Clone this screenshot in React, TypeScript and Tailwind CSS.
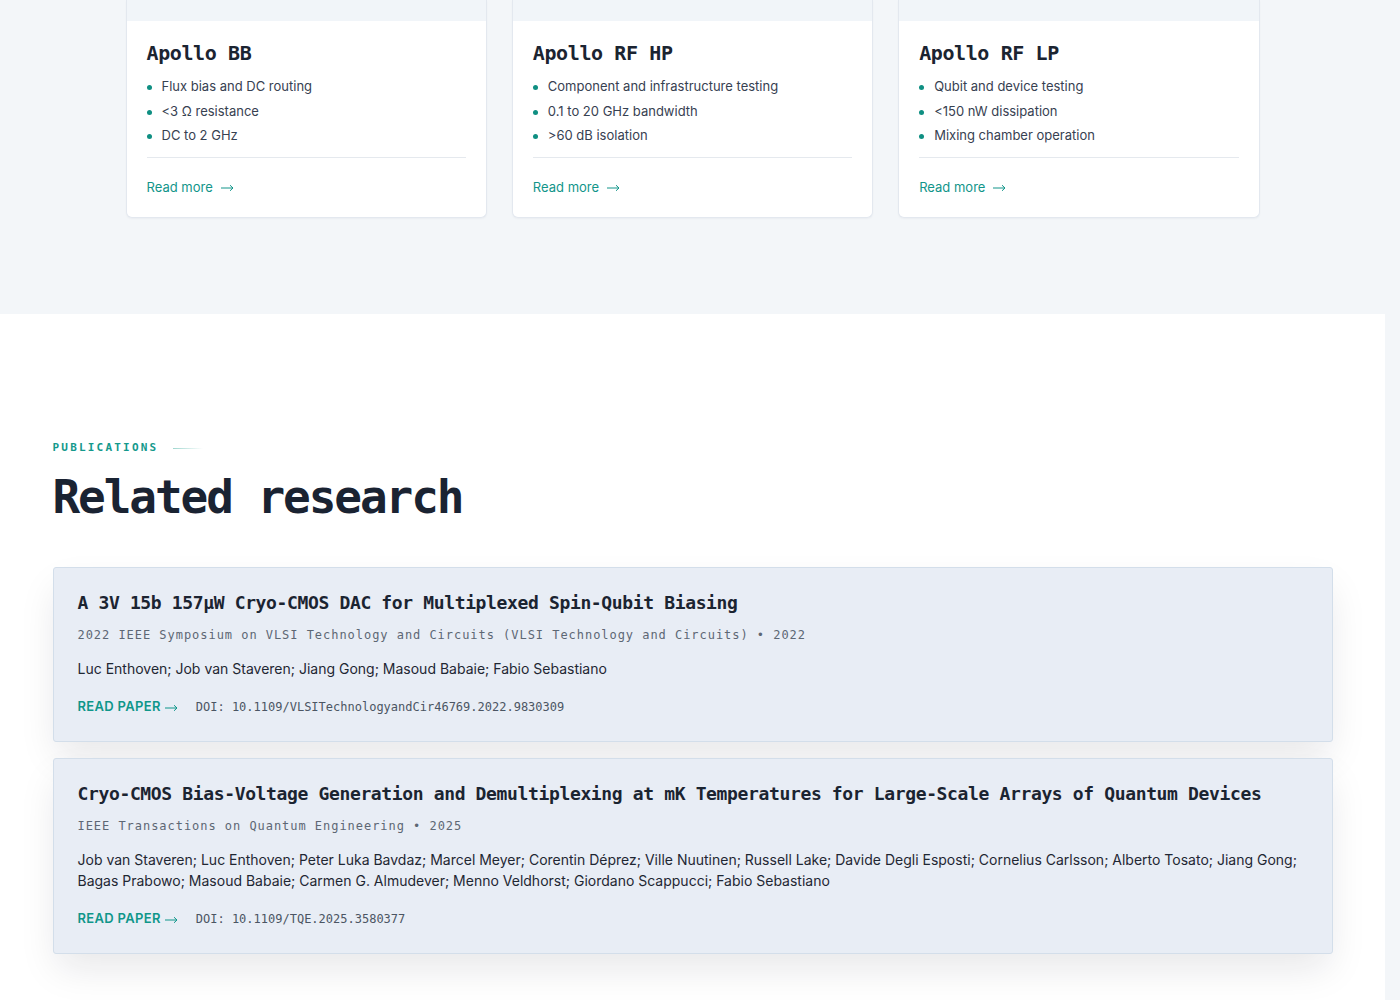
const mono = "font-['DejaVu_Sans_Mono',monospace]";

type Product = { name: string; specs: string[] };

const products: Product[] = [
  {
    name: "Apollo BB",
    specs: ["Flux bias and DC routing", "<3 Ω resistance", "DC to 2 GHz"],
  },
  {
    name: "Apollo RF HP",
    specs: [
      "Component and infrastructure testing",
      "0.1 to 20 GHz bandwidth",
      ">60 dB isolation",
    ],
  },
  {
    name: "Apollo RF LP",
    specs: [
      "Qubit and device testing",
      "<150 nW dissipation",
      "Mixing chamber operation",
    ],
  },
];

type Paper = {
  title: string;
  venue: string;
  year: number;
  authors: string;
  doi: string;
};

const papers: Paper[] = [
  {
    title: "A 3V 15b 157μW Cryo-CMOS DAC for Multiplexed Spin-Qubit Biasing",
    venue:
      "2022 IEEE Symposium on VLSI Technology and Circuits (VLSI Technology and Circuits)",
    year: 2022,
    authors:
      "Luc Enthoven; Job van Staveren; Jiang Gong; Masoud Babaie; Fabio Sebastiano",
    doi: "10.1109/VLSITechnologyandCir46769.2022.9830309",
  },
  {
    title:
      "Cryo-CMOS Bias-Voltage Generation and Demultiplexing at mK Temperatures for Large-Scale Arrays of Quantum Devices",
    venue: "IEEE Transactions on Quantum Engineering",
    year: 2025,
    authors:
      "Job van Staveren; Luc Enthoven; Peter Luka Bavdaz; Marcel Meyer; Corentin Déprez; Ville Nuutinen; Russell Lake; Davide Degli Esposti; Cornelius Carlsson; Alberto Tosato; Jiang Gong; Bagas Prabowo; Masoud Babaie; Carmen G. Almudever; Menno Veldhorst; Giordano Scappucci; Fabio Sebastiano",
    doi: "10.1109/TQE.2025.3580377",
  },
];

// long thin arrow used after link labels
function Arrow() {
  return (
    <svg
      width="13"
      height="8"
      viewBox="0 0 13 8"
      fill="none"
      stroke="currentColor"
      strokeWidth="1"
      className="mt-px shrink-0"
    >
      <path d="M0 4h12M9 1.2L12 4L9 6.8" />
    </svg>
  );
}

// card image sits above the fold, so only its bottom edge shows
function ProductCard({ item }: { item: Product }) {
  return (
    <div className="flex flex-col rounded-b-md border border-t-0 border-[#e3e8ef] bg-white overflow-hidden shadow-[0_1px_2px_rgba(15,23,42,0.04)]">
      <div className="h-[21px] bg-[#f1f5f9]" />
      <div className="px-5 pt-5 pb-5">
        <h3
          className={`${mono} text-[20px] leading-[24px] font-bold tracking-[-0.02em] text-[#1b2431]`}
        >
          {item.name}
        </h3>
        <ul className="mt-[11px] flex flex-col gap-[4.5px]">
          {item.specs.map((s) => (
            <li
              key={s}
              className="flex items-center gap-[10px] text-[13px] leading-[20px] text-[#374151]"
            >
              <span className="mt-[3px] w-[5px] h-[5px] rounded-full bg-[#0f8f82] shrink-0" />
              {s}
            </li>
          ))}
        </ul>
        <div className="mt-3 h-px bg-[#e5e9ee]" />
        <a
          href="#"
          className="mt-[19px] flex items-center gap-[8px] text-[13px] leading-[20px] text-[#12958a]"
        >
          Read more <Arrow />
        </a>
      </div>
    </div>
  );
}

function PaperCard({ paper }: { paper: Paper }) {
  return (
    <div className="rounded-[3px] border border-[#d3deea] bg-[#e8edf5] p-6 shadow-[0_18px_36px_-4px_rgba(15,23,42,0.10)]">
      <h3
        className={`${mono} text-[18px] leading-[22px] font-bold tracking-[-0.02em] text-[#1b2431]`}
      >
        {paper.title}
      </h3>
      <p
        className={`${mono} mt-3 text-[12px] leading-[18px] tracking-[0.08em] text-[#5d6774]`}
      >
        {paper.venue} • {paper.year}
      </p>
      <p className="mt-3.5 text-[14px] leading-[21px] text-[#1f2733]">
        {paper.authors}
      </p>
      <div className="mt-[18px] flex items-center gap-[18px] h-5">
        <a
          href="#"
          className="flex items-center gap-[4px] text-[13px] font-semibold tracking-[0.025em] text-[#0f968a]"
        >
          READ PAPER <Arrow />
        </a>
        <span className={`${mono} text-[12px] text-[#4b5563]`}>
          DOI: {paper.doi}
        </span>
      </div>
    </div>
  );
}

export default function App() {
  return (
    <div className="min-h-[1000px] bg-[#f3f6f9] font-['Inter',sans-serif]">
      <div className="w-[1385px]">
        <section className="bg-[#f3f6f9] pb-[96px]">
          <div className="mx-auto w-[1134px] grid grid-cols-3 gap-[25px]">
            {products.map((p) => (
              <ProductCard key={p.name} item={p} />
            ))}
          </div>
        </section>

        <section className="bg-white pt-[126px] pb-[60px]">
          <div className="mx-auto w-[1280px]">
            <div className="flex items-center gap-[15px] h-4">
              <span
                className={`${mono} text-[11px] font-bold tracking-[0.2em] text-[#14998c]`}
              >
                PUBLICATIONS
              </span>
              <span className="w-[30px] h-px bg-gradient-to-r from-[#9fd6cf] to-transparent" />
            </div>
            <h2
              className={`${mono} mt-4 text-[46px] leading-[50px] font-bold tracking-[-0.045em] text-[#1a2332]`}
            >
              Related research
            </h2>
            <div className="mt-[45px] flex flex-col gap-4">
              {papers.map((p) => (
                <PaperCard key={p.doi} paper={p} />
              ))}
            </div>
          </div>
        </section>
      </div>
    </div>
  );
}
